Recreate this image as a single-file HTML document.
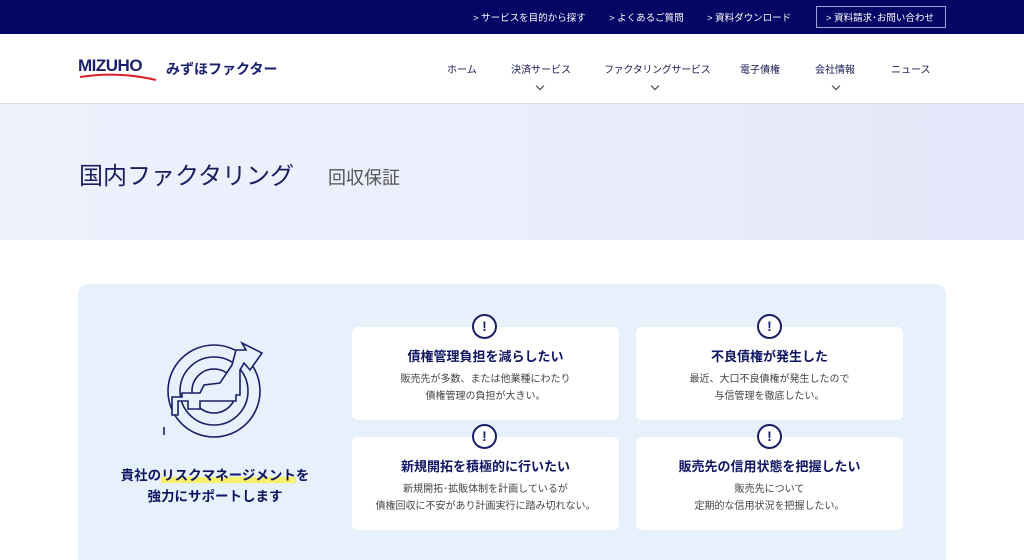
<!DOCTYPE html>
<html><head><meta charset="utf-8"><style>
*{margin:0;padding:0;box-sizing:border-box}
html,body{width:1024px;height:560px;overflow:hidden}
body{background:#fff;font-family:"Liberation Sans","Noto Sans CJK JP",sans-serif;position:relative}
.top{position:absolute;left:0;top:0;width:1024px;height:34px;background:#050565}
.top span{position:absolute;top:10px;font-size:9.5px;color:#fff;white-space:nowrap}
.cta{position:absolute;left:816px;top:6px;width:130px;height:22px;border:1px solid #9ea4d6}
.nav{position:absolute;top:61px;font-size:10px;color:#1a1a55;white-space:nowrap}
.chev{position:absolute;top:83px;width:6px;height:6px;border-right:1px solid #333;border-bottom:1px solid #333;transform:rotate(45deg)}
.hero{position:absolute;left:0;top:103px;width:1024px;height:137px;background:linear-gradient(90deg,#eef1fc,#eaedfb 60%,#e4e6fa);border-top:1px solid #dcdce8}
.panel{position:absolute;left:78px;top:284px;width:868px;height:300px;background:#e6f1fc;border-radius:10px}
.card{position:absolute;width:267px;height:93px;background:#fff;border-radius:6px;text-align:center}
.card h3{font-size:13px;color:#0f1560;margin-top:19px;font-weight:bold}
.card p{font-size:10px;color:#444;line-height:17px;margin-top:6px}
.ic{position:absolute;width:25px;height:25px;border:2px solid #1a1f66;border-radius:50%;background:#fff;color:#1a1f66;font-weight:bold;font-size:14px;line-height:21px;text-align:center}
</style></head><body>
<div class="top">
<span style="left:473px">&gt; サービスを目的から探す</span>
<span style="left:609px">&gt; よくあるご質問</span>
<span style="left:707px">&gt; 資料ダウンロード</span>
<div class="cta"></div>
<span style="left:826px">&gt; 資料請求･お問い合わせ</span>
</div>
<div style="position:absolute;left:78px;top:56px;font-size:17px;font-weight:bold;color:#1a1f6e;letter-spacing:-0.5px">MIZUHO</div>
<svg style="position:absolute;left:78px;top:72px" width="80" height="10"><path d="M2 5 Q40 -1 78 8" stroke="#d8202a" stroke-width="2" fill="none"/></svg>
<div style="position:absolute;left:166px;top:59px;font-size:14px;font-weight:bold;color:#1a1f6e">みずほファクター</div>
<div class="nav" style="left:447px">ホーム</div>
<div class="nav" style="left:511px">決済サービス</div>
<div class="nav" style="left:604px;letter-spacing:-0.3px">ファクタリングサービス</div>
<div class="nav" style="left:740px">電子債権</div>
<div class="nav" style="left:815px">会社情報</div>
<div class="nav" style="left:891px">ニュース</div>
<div class="chev" style="left:537px"></div>
<div class="chev" style="left:652px"></div>
<div class="chev" style="left:833px"></div>
<div class="hero">
<div style="position:absolute;left:79px;top:52px;font-size:24px;color:#1a1f5e">国内ファクタリング</div>
<div style="position:absolute;left:328px;top:60px;font-size:18px;color:#555">回収保証</div>
</div>
<div class="panel"></div>
<svg style="position:absolute;left:160px;top:335px" width="110" height="105" fill="none" stroke="#1a1f66" stroke-width="1.6">
<circle cx="54" cy="56" r="46"/><circle cx="54" cy="56" r="34"/><circle cx="54" cy="56" r="22"/>
<path d="M72 30 L76 15 L86 15 L82 8 L102 18 L90 35 L84 28 L80 35 L80 60 L76 60 L76 66 L40 66 L40 74 L28 74 L28 66 L18 66 L18 80 L12 80 L12 62 L22 62 L22 58 L40 58 L44 50 L60 48 L68 36 Z" fill="#e6f1fc"/>
<path d="M4 92 L4 100"/>
</svg>
<div style="position:absolute;left:115px;top:465px;width:200px;text-align:center;font-size:13.5px;font-weight:bold;color:#0f1560;line-height:21px">貴社の<span style="background:linear-gradient(transparent 60%,#f6f06a 60%)">リスクマネージメント</span>を<br>強力にサポートします</div>
<div class="card" style="left:352px;top:327px"><h3>債権管理負担を減らしたい</h3><p>販売先が多数、または他業種にわたり<br>債権管理の負担が大きい。</p></div>
<div class="card" style="left:636px;top:327px"><h3>不良債権が発生した</h3><p>最近、大口不良債権が発生したので<br>与信管理を徹底したい。</p></div>
<div class="card" style="left:352px;top:437px"><h3>新規開拓を積極的に行いたい</h3><p>新規開拓･拡販体制を計画しているが<br>債権回収に不安があり計画実行に踏み切れない。</p></div>
<div class="card" style="left:636px;top:437px"><h3>販売先の信用状態を把握したい</h3><p>販売先について<br>定期的な信用状況を把握したい。</p></div>
<div class="ic" style="left:472px;top:314px">!</div>
<div class="ic" style="left:757px;top:314px">!</div>
<div class="ic" style="left:472px;top:424px">!</div>
<div class="ic" style="left:757px;top:424px">!</div>
</body></html>
